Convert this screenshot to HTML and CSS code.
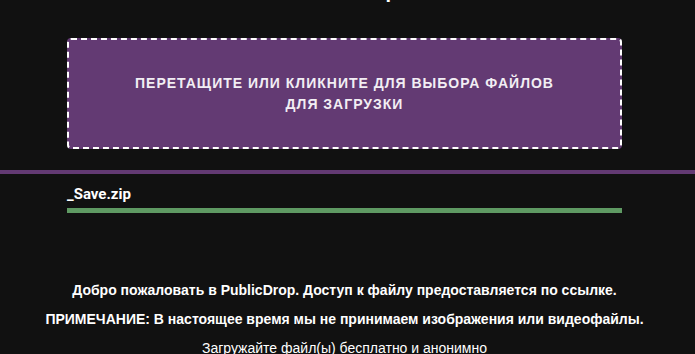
FILE: index.html
```html
<!DOCTYPE html>
<html lang="ru">
<head>
    <meta charset="UTF-8">
    <meta name="viewport" content="width=device-width, initial-scale=1.0">
    <title>PublicDrop</title>
    <link rel="stylesheet" href="styles.css">
</head>
<body>
    <div class="page">
        <h1 class="title">PublicDrop</h1>

        <div class="dropzone">
            <p class="dropzone-text">Перетащите или кликните для выбора файлов для загрузки</p>
        </div>
    </div>

    <div class="divider"></div>

    <div class="page">
        <div class="files">
            <div class="file">
                <div class="file-name">_Save.zip</div>
                <div class="file-bar"></div>
            </div>
        </div>

        <div class="info">
            <p class="info-bold">Добро пожаловать в PublicDrop. Доступ к файлу предоставляется по ссылке.</p>
            <p class="info-bold">ПРИМЕЧАНИЕ: В настоящее время мы не принимаем изображения или видеофайлы.</p>
            <p>Загружайте файл(ы) бесплатно и анонимно</p>
        </div>
    </div>
</body>
</html>
```

FILE: styles.css
```css
body {
    margin: 0;
    background-color: #111111;
    color: #ffffff;
    font-family: "Liberation Sans", Arial, sans-serif;
    overflow: hidden;
}
.page {
    width: 689px;
}
.title {
    margin: -19px 0 0;
    font-size: 20px;
    line-height: 20px;
    text-align: center;
}

/* drop area */
.dropzone {
    box-sizing: border-box;
    width: 555px;
    height: 111px;
    margin: 37px auto 0;
    padding: 0 60px;
    display: flex;
    align-items: center;
    justify-content: center;
    background-color: #633a73;
    border: 2px dashed #ffffff;
    border-radius: 4px;
}
.dropzone-text {
    margin: 0;
    text-align: center;
    text-transform: uppercase;
    font-size: 14px;
    font-weight: bold;
    line-height: 21px;
    letter-spacing: 1px;
    color: #f2eef4;
}

.divider {
    height: 4px;
    margin-top: 21px;
    background-color: #633a73;
}

/* uploaded files */
.files {
    width: 555px;
    margin: 0 auto;
}
.file {
    padding-top: 12px;
}
.file-name {
    font-family: Roboto, "Liberation Sans", sans-serif;
    font-size: 15px;
    font-weight: bold;
    line-height: 17px;
}
.file-bar {
    height: 5px;
    margin-top: 5px;
    background-color: #5f9a63;
}

/* bottom text */
.info {
    padding-top: 69px;
    text-align: center;
}
.info p {
    margin: 0 0 13px;
    font-size: 14px;
    line-height: 16px;
}
.info .info-bold {
    font-weight: bold;
}
```
